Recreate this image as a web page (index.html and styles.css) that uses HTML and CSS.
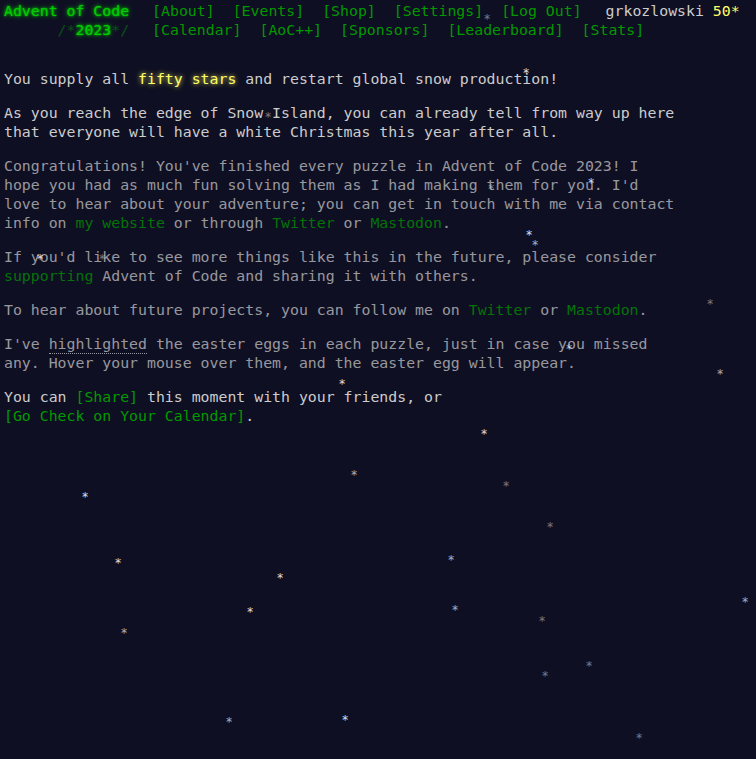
FILE: index.html
```
<!DOCTYPE html>
<html lang="en">
<head>
<meta charset="utf-8">
<title>Day 25 - Advent of Code 2023</title>
<link rel="stylesheet" href="styles.css">
</head>
<body>
<header>
  <div class="row">
    <h1 class="title"><a href="#">Advent of Code</a></h1>
    <nav><ul>
      <li><a href="#">[About]</a></li>
      <li><a href="#">[Events]</a></li>
      <li><a href="#">[Shop]</a></li>
      <li><a href="#">[Settings]</a></li>
      <li><a href="#">[Log Out]</a></li>
    </ul></nav>
    <div class="user">grkozlowski <span class="star-count">50*</span></div>
  </div>
  <div class="row">
    <h1 class="title"><span class="wrap">      /*</span><a href="#">2023</a><span class="wrap">*/</span></h1>
    <nav><ul>
      <li><a href="#">[Calendar]</a></li>
      <li><a href="#">[AoC++]</a></li>
      <li><a href="#">[Sponsors]</a></li>
      <li><a href="#">[Leaderboard]</a></li>
      <li><a href="#">[Stats]</a></li>
    </ul></nav>
  </div>
</header>
<main>
  <article>
    <p>You supply all <em class="star">fifty stars</em> and restart global snow production!</p>
    <p>As you reach the edge of Snow Island, you can already tell from way up here that everyone will have a white Christmas this year after all.</p>
    <p class="quiet">Congratulations! You've finished every puzzle in Advent of Code 2023! I hope you had as much fun solving them as I had making them for you. I'd love to hear about your adventure; you can get in touch with me via contact info on <a href="#">my website</a> or through <a href="#">Twitter</a> or <a href="#">Mastodon</a>.</p>
    <p class="quiet">If you'd like to see more things like this in the future, please consider <a href="#">supporting</a> Advent of Code and sharing it with others.</p>
    <p class="quiet">To hear about future projects, you can follow me on <a href="#">Twitter</a> or <a href="#">Mastodon</a>.</p>
    <p class="quiet">I've <span class="egg">highlighted</span> the easter eggs in each puzzle, just in case you missed any. Hover your mouse over them, and the easter egg will appear.</p>
    <p>You can <a class="share" href="#">[Share]</a> this moment with your friends, or <a class="share" href="#">[Go Check on Your Calendar]</a>.</p>
  </article>
</main>
<div class="snow" aria-hidden="true">
  <span class="flake dim" style="left:487px;top:16px">*</span>
  <span class="flake" style="left:526px;top:70px">*</span>
  <span class="flake dim" style="left:268px;top:114px">*</span>
  <span class="flake dim" style="left:491px;top:186px">*</span>
  <span class="flake" style="left:591px;top:180px">*</span>
  <span class="flake" style="left:529px;top:232px">*</span>
  <span class="flake mid" style="left:535px;top:242px">*</span>
  <span class="flake" style="left:40px;top:256px">*</span>
  <span class="flake dim" style="left:102px;top:256px">*</span>
  <span class="flake dim" style="left:710px;top:301px">*</span>
  <span class="flake mid" style="left:569px;top:346px">*</span>
  <span class="flake mid" style="left:720px;top:371px">*</span>
  <span class="flake" style="left:342px;top:381px">*</span>
  <span class="flake" style="left:484px;top:431px">*</span>
  <span class="flake mid" style="left:354px;top:472px">*</span>
  <span class="flake dim" style="left:506px;top:483px">*</span>
  <span class="flake" style="left:85px;top:494px">*</span>
  <span class="flake dim" style="left:550px;top:524px">*</span>
  <span class="flake mid" style="left:451px;top:557px">*</span>
  <span class="flake" style="left:118px;top:560px">*</span>
  <span class="flake" style="left:280px;top:575px">*</span>
  <span class="flake mid" style="left:745px;top:599px">*</span>
  <span class="flake" style="left:250px;top:609px">*</span>
  <span class="flake mid" style="left:455px;top:607px">*</span>
  <span class="flake dim" style="left:542px;top:618px">*</span>
  <span class="flake mid" style="left:124px;top:630px">*</span>
  <span class="flake dim" style="left:589px;top:663px">*</span>
  <span class="flake dim" style="left:545px;top:673px">*</span>
  <span class="flake mid" style="left:229px;top:719px">*</span>
  <span class="flake" style="left:345px;top:717px">*</span>
  <span class="flake dim" style="left:639px;top:735px">*</span>
</div>
</body>
</html>
```
FILE: styles.css
```
html, body {
  background: #0f0f23;
}
body {
  margin: 0;
  padding: 2px 4px 0;
  color: #cccccc;
  font-family: "DejaVu Sans Mono", "Liberation Mono", monospace;
  font-size: 14.85px;
  line-height: 19px;
  min-height: 759px;
  box-sizing: border-box;
  position: relative;
  overflow: hidden;
}
a {
  color: #009900;
  text-decoration: none;
}
a.share {
  white-space: nowrap;
}
header {
  white-space: nowrap;
  margin-bottom: 30px;
}
header .row {
  display: flex;
  align-items: baseline;
}
header h1.title {
  margin: 0;
  font-size: 1em;
  font-weight: normal;
  width: 14ch;
  padding-right: 14px;
  flex: none;
  white-space: pre;
}
header h1.title a {
  color: #00cc00;
  text-shadow: 0 0 2px #00cc00, 0 0 5px #00cc00;
}
header h1.title .wrap {
  color: #00cc00;
  opacity: 0.33;
}
header nav ul {
  list-style: none;
  margin: 0;
  padding: 0;
  display: flex;
}
header nav li {
  padding: 0 9px;
}
header .user {
  padding-left: 15px;
  color: #cccccc;
}
header .star-count {
  color: #ffff66;
}
article {
  width: 75ch;
}
article p {
  margin: 15px 0;
}
article p:first-child {
  margin-top: 0;
}
em.star {
  font-style: normal;
  color: #ffff66;
  text-shadow: 0 0 5px #ffff66;
}
.quiet {
  opacity: 0.72;
}
.egg {
  border-bottom: 1px dotted #cccccc;
}
.snow {
  position: absolute;
  inset: 0;
  pointer-events: none;
}
.flake {
  position: absolute;
  font-family: "DejaVu Sans Mono", monospace;
  font-size: 12px;
  line-height: 12px;
  color: #e8e8f0;
  opacity: 0.95;
  transform: translate(-3.6px, -3.4px);
}
.flake.mid {
  opacity: 0.72;
}
.flake.dim {
  opacity: 0.48;
}
```
